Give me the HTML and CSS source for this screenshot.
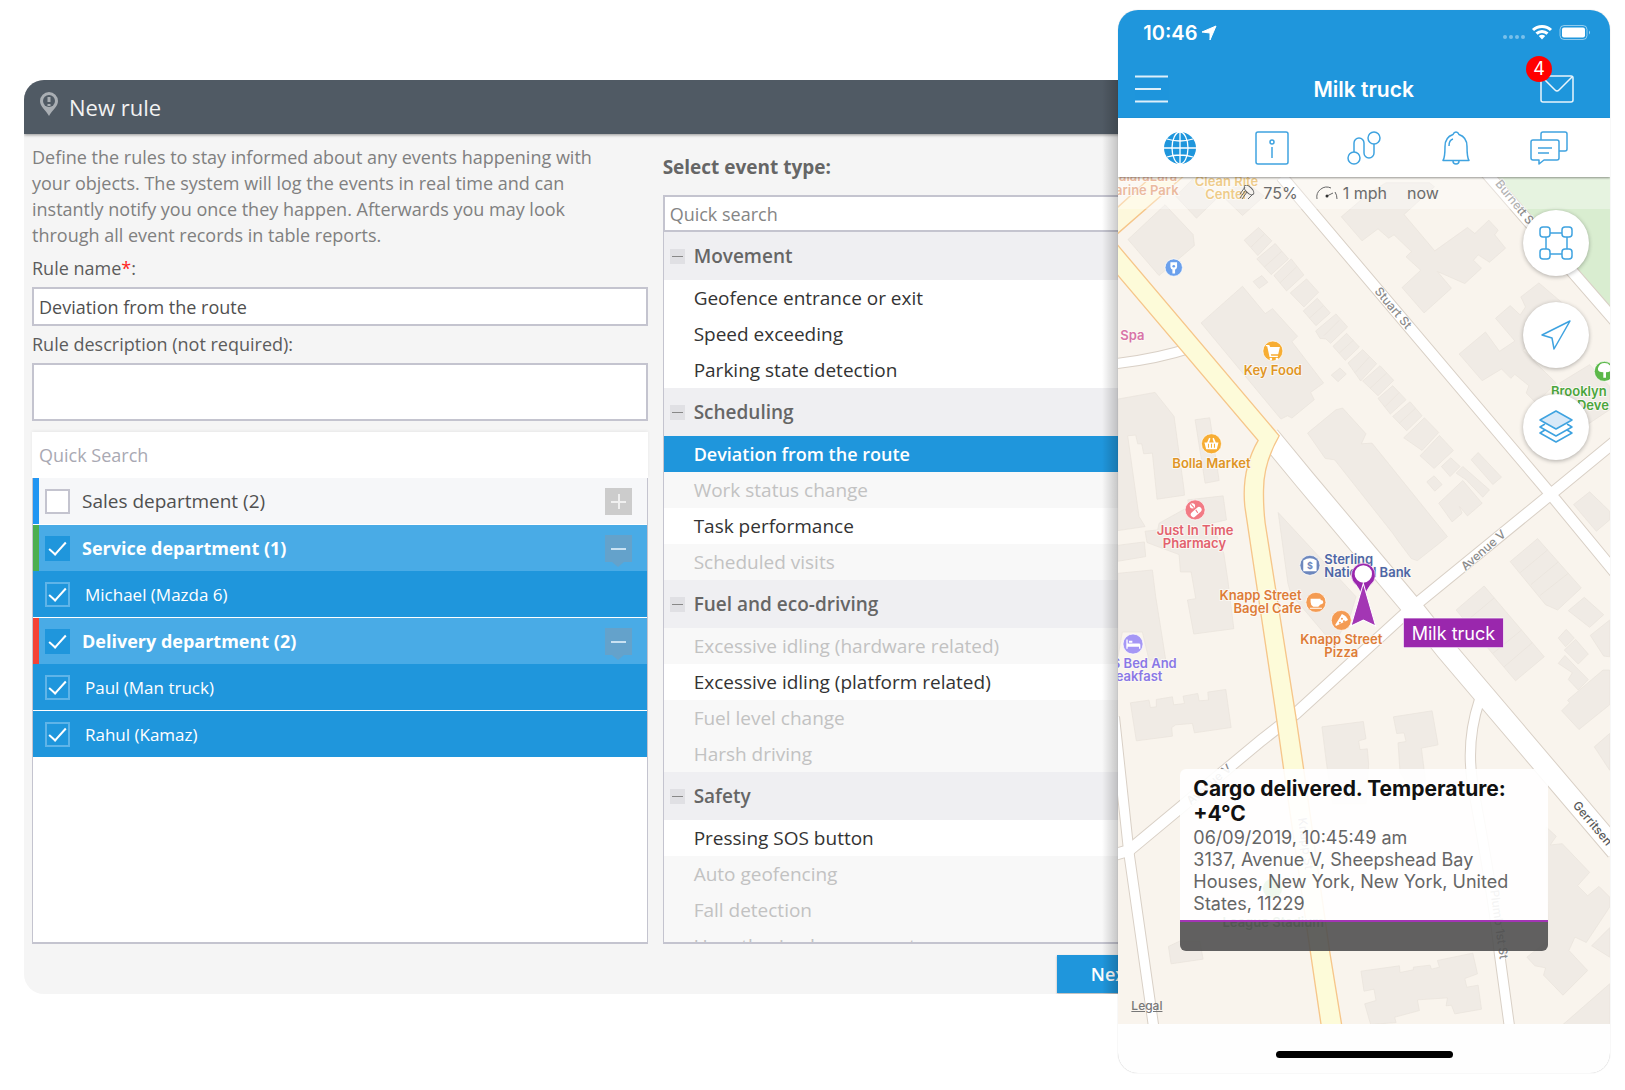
FILE: index.html
```html
<!DOCTYPE html>
<html lang="en">
<head>
<meta charset="utf-8">
<meta name="viewport" content="width=device-width, initial-scale=1">
<title>New rule</title>
<link rel="stylesheet" href="styles.css">
</head>
<body>
<main class="stage">
  <section class="panel">
    <header class="panel-head">
      <svg class="pin" viewBox="0 0 18 24" aria-hidden="true"><path d="M9 0a9 9 0 0 0-9 9c0 6 6 9 9 15 3-6 9-9 9-15a9 9 0 0 0-9-9z" fill="#a9aeb3"/><circle cx="9" cy="9" r="6" fill="#505a64"/><path d="M9 5v5M9 12v2" stroke="#a9aeb3" stroke-width="3"/></svg>
      <h1>New rule</h1>
    </header>
    <form class="panel-body">
      <div class="left">
        <p class="intro">Define the rules to stay informed about any events happening with your objects. The system will log the events in real time and can instantly notify you once they happen. Afterwards you may look through all event records in table reports.</p>
        <label class="field-label" for="rule-name">Rule name<span class="req">*</span>:</label>
        <input class="field" id="rule-name" type="text" value="Deviation from the route">
        <label class="field-label" for="rule-desc">Rule description (not required):</label>
        <textarea class="field area" id="rule-desc"></textarea>
        <input class="tree-search" type="search" placeholder="Quick Search" aria-label="Quick Search">
        <ul class="tree">
          <li class="row group blue"><label><input type="checkbox"><span>Sales department (2)</span></label><button type="button" class="toggle plus" aria-label="Expand"></button></li>
          <li class="row group on green"><label><input type="checkbox" checked><span>Service department (1)</span></label><button type="button" class="toggle" aria-label="Collapse"></button></li>
          <li class="row child"><label><input type="checkbox" checked><span>Michael (Mazda 6)</span></label></li>
          <li class="row group on red"><label><input type="checkbox" checked><span>Delivery department (2)</span></label><button type="button" class="toggle" aria-label="Collapse"></button></li>
          <li class="row child"><label><input type="checkbox" checked><span>Paul (Man truck)</span></label></li>
          <li class="row child"><label><input type="checkbox" checked><span>Rahul (Kamaz)</span></label></li>
        </ul>
      </div>
      <div class="right">
        <h2><label for="event-search">Select event type:</label></h2>
        <input class="event-search" id="event-search" type="search" placeholder="Quick search">
        <ul class="events">
          <li class="cat"><button type="button"><i></i>Movement</button></li>
          <li><button type="button">Geofence entrance or exit</button></li>
          <li><button type="button">Speed exceeding</button></li>
          <li><button type="button">Parking state detection</button></li>
          <li class="cat"><button type="button"><i></i>Scheduling</button></li>
          <li class="picked"><button type="button">Deviation from the route</button></li>
          <li><button type="button" disabled>Work status change</button></li>
          <li><button type="button">Task performance</button></li>
          <li><button type="button" disabled>Scheduled visits</button></li>
          <li class="cat"><button type="button"><i></i>Fuel and eco-driving</button></li>
          <li><button type="button" disabled>Excessive idling (hardware related)</button></li>
          <li><button type="button">Excessive idling (platform related)</button></li>
          <li><button type="button" disabled>Fuel level change</button></li>
          <li><button type="button" disabled>Harsh driving</button></li>
          <li class="cat"><button type="button"><i></i>Safety</button></li>
          <li><button type="button">Pressing SOS button</button></li>
          <li><button type="button" disabled>Auto geofencing</button></li>
          <li><button type="button" disabled>Fall detection</button></li>
          <li><button type="button" disabled>Unauthorized movement</button></li>
        </ul>
      </div>
      <footer class="panel-foot"><button type="submit" class="next">Next</button></footer>
    </form>
  </section>

  <section class="phone">
    <header class="app-head">
      <div class="status">
        <span class="clock">10:46</span>
        <svg class="loc" viewBox="0 0 14 14" aria-hidden="true"><path d="M14 0L8 14V7L0 6z" fill="#fff" stroke="#fff"/></svg>
        <svg class="signal" viewBox="0 0 88 18" aria-hidden="true">
          <g fill="#fff" opacity=".4"><circle cx="2" cy="13" r="2"/><circle cx="8" cy="13" r="2"/><circle cx="14" cy="13" r="2"/><circle cx="20" cy="13" r="2"/></g>
          <g fill="none" stroke="#fff" stroke-width="3"><path d="M30 6a13 13 0 0 1 18 0"/><path d="M33.500 9.700a8 8 0 0 1 11 0"/></g>
          <path d="M39 15.500l-3.200-3.500a5 5 0 0 1 6.400 0z" fill="#fff"/>
          <rect x="57" y="1.500" width="27" height="14" rx="4" fill="none" stroke="#fff" stroke-opacity=".5"/>
          <rect x="59" y="3.500" width="23" height="10" rx="2" fill="#fff"/>
          <path d="M86 6.500q2 2 0 4z" fill="#fff" opacity=".6"/>
        </svg>
      </div>
      <div class="title-bar">
        <button type="button" class="icon-btn menu" aria-label="Menu"><svg viewBox="0 0 34 28"><path d="M0 1.500h33M0 14h26M0 26.500h33" stroke="#fff" stroke-width="2" opacity=".85"/></svg></button>
        <h2>Milk truck</h2>
        <button type="button" class="icon-btn mail" aria-label="Messages"><svg viewBox="0 0 34 28"><g fill="none" stroke="#fff" stroke-width="1.500" opacity=".9"><rect x="1" y="1" width="32" height="26" rx="2"/><path d="M2 2l13 13q2 2 4 0L32 2"/></g></svg><span class="badge">4</span></button>
      </div>
    </header>
    <nav class="tabs">
      <button type="button" aria-label="Map"><svg viewBox="0 0 34 34"><circle cx="17" cy="17" r="16" fill="#1f96dc"/><g fill="none" stroke="#fff" stroke-width="1.300"><ellipse cx="17" cy="17" rx="8" ry="16"/><path d="M17 1v32M1 17h32M4 8q13 4 26 0M4 26q13-4 26 0"/></g></svg></button>
      <button type="button" aria-label="Info"><svg viewBox="0 0 34 34"><g class="ln"><rect x="1" y="1" width="32" height="32" rx="2"/><circle cx="17" cy="11" r="2"/><path d="M17 16v11"/></g></svg></button>
      <button type="button" aria-label="Tracks"><svg viewBox="0 0 34 34"><g class="ln"><circle cx="7" cy="27" r="6"/><circle cx="27" cy="7" r="6"/><path d="M7 21V12a5 5 0 0 1 10 0v10a5 5 0 0 0 10 0V13"/></g></svg></button>
      <button type="button" aria-label="Alerts"><svg viewBox="0 0 34 34"><g class="ln"><path d="M17 1q2 0 3 2.500c6 2 8 6 8 12 0 7 0 11 2 14H4c2-3 2-7 2-14 0-6 2-10 8-12Q15 1 17 1z"/><path d="M10 15q0-6 4-7M14 30q0 3 3 3t3-3"/></g></svg></button>
      <button type="button" aria-label="Chat"><svg viewBox="0 0 38 34"><g class="ln"><path d="M3 9h24q2 0 2 2v16q0 2-2 2H14l-5 4v-4H3q-2 0-2-2V11q0-2 2-2z"/><path d="M11 9V3q0-2 2-2h22q2 0 2 2v15q0 2-2 2h-6M8 17h14M8 22h11"/></g></svg></button>
    </nav>
    <div class="map">
      <svg class="map-art" viewBox="27 21 1473 2541" preserveAspectRatio="xMidYMid slice">
        <rect x="0" y="0" width="1600" height="2600" fill="#f9f4ed"/>
        <path d="M1165 21H1510V425z" fill="#d9edd0"/>
        <g class="bld">
          <path d="M57 210L168 106 252 195 256 228 150 318z"/>
          <path d="M200 80L250 30 320 90 262 146zM340 80L400 30 465 80 400 138z"/>
          <path d="M405 212L448 174 488 214 446 258zM443 268L498 222 538 268 486 315zM494 318L546 268 584 316 532 364zM543 370L592 328 628 368 584 412zM582 424L624 386 663 430 620 468zM619 484L680 433 715 472 664 521 650 508 632 506zM671 530L712 491 750 532 708 572zM716 580L760 540 802 582 754 634zM760 634L812 588 853 632 806 678zM806 686L850 648 890 690 843 733zM850 740L902 696 938 738 892 783zM883 804L945 744 988 788 938 842zM932 858L990 797 1032 842 974 896zM432 336L458 318 476 338 450 357zM666 616L692 595 711 613 686 636z"/>
          <path d="M426 232L465 194M466 292L518 245M512 340L562 292M600 446L642 408M644 498L690 452M690 550L732 512M738 608L780 562M782 656L832 610M828 710L870 668M870 760L918 716"/>
          <path d="M276 460L400 350 468 432 490 417 565 500 548 516 643 640 604 668 615 690 548 745 535 738 515 748z"/>
          <path d="M696 142L780 70 830 40 960 40 975 52 884 135 976 244 1074 174 1096 192 1138 152 1166 182 1156 196 1188 236 1140 278 1106 256 1092 272 1116 296 1066 342 984 306 1026 356 944 430 878 354 934 302 890 262 906 246 854 196 838 206 806 178 758 214z"/>
          <path d="M1049 553L1128 487 1170 545 1216 514 1158 446 1202 408 1232 436 1248 412 1234 382 1288 340 1370 410 1300 480 1240 542 1340 640 1280 700 1250 670 1258 648 1216 614 1204 626 1176 598 1118 633z"/>
          <path d="M1350 640L1440 585 1500 650V720L1410 780z"/>
          <path d="M595 790L680 720 700 715 770 792 756 822 788 820 1014 1100 990 1120 924 1172 906 1166 864 1110 850 1090 676 870 648 866z"/>
          <path d="M1085 870L1106 848 1176 922 1150 944zM996 890L1024 864 1052 890 1022 920zM952 936L974 918 998 944 976 964zM988 1000L1060 932 1118 1000 1074 1038 1050 1010 1058 1030 1028 1056zM1060 890L1140 960 1120 982 1070 930 1040 910z"/>
          <path d="M27 688L138 668 195 740 225 960 226 976 144 988 130 850 104 852 98 822 86 822 80 796 56 798 90 1040 106 1066 108 1070 27 1082zM258 750L302 744 330 932 288 940z"/>
          <path d="M108 1084L146 1080 150 1060 240 1010 236 990 342 978 352 1050 298 1062 320 1090 344 1150 356 1230 374 1376 254 1392 235 1290 260 1286 246 1206 214 1206 210 1154 114 1118zM27 1126L106 1116 110 1160 27 1174zM27 1210L130 1200 140 1280 156 1380 170 1470 120 1470 100 1386 40 1386 27 1460z"/>
          <path d="M64 1598L120 1590 124 1612 142 1610V1588L190 1580 194 1604 226 1600 222 1578 266 1570 270 1592 298 1590 296 1566 350 1558 366 1672 256 1688 250 1660 200 1664 188 1672 190 1698 82 1712z"/>
          <path d="M507 1028L740 1280 722 1340 690 1394 655 1402 545 1272 536 1240z"/>
          <path d="M638 1670L762 1654 770 1706 748 1712 752 1738 774 1736 778 1782 770 1900 670 1900 652 1782zM852 1640L968 1622 986 1724 936 1734 948 1830 900 1850 872 1806 866 1718 890 1714 884 1688 862 1690z"/>
          <path d="M1202 1175L1284 1106 1415 1254 1344 1320 1308 1304zM1040 1320L1124 1248 1304 1460 1218 1532 1140 1440z"/>
          <path d="M1232 1208L1314 1140M1264 1244L1346 1176M1292 1276L1376 1210M1070 1354L1154 1284M1150 1450L1236 1380M1184 1490L1268 1418"/>
          <path d="M1392 1004L1440 966 1500 1024V1050L1460 1084zM1346 1404L1370 1378 1394 1404 1368 1430zM1364 1440L1398 1408 1436 1452 1406 1482zM1376 1322L1424 1282 1482 1334 1440 1372zM1442 1396L1500 1350V1460L1482 1458zM1346 1480L1366 1456 1398 1490 1436 1528 1406 1560 1376 1528 1388 1508zM1356 1622L1380 1598 1374 1590 1480 1500H1500V1604L1408 1678zM1454 1730L1500 1690V1800z"/>
          <path d="M1310 1970L1340 1998 1322 2024 1358 2020 1440 2106 1404 2146 1434 2176 1468 2148 1500 2180V2210L1430 2316 1396 2300 1378 2340 1434 2400 1360 2474 1302 2414 1308 2392 1276 2386 1252 2360 1316 2310zM1446 2326L1500 2272V2360zM1360 2562L1500 2440V2562z"/>
          <path d="M178 2328L212 2312H272L282 2366 186 2380zM755 2402L870 2386 872 2406 912 2398V2390L962 2384 966 2396 990 2390 984 2370 1090 2348 1104 2410 1066 2424 1072 2450 1106 2444 1116 2516 1036 2530 1026 2504 1010 2506 1014 2482 924 2488 930 2520 856 2540 860 2556 784 2562 766 2500 800 2490 794 2456 764 2462z"/>
        </g>
        <g class="road-edge">
          <path stroke-width="38" d="M517 21L1325 975 1520 1212M1130 10L1520 458M1520 812L1325 972 905 1315 560 1630 457 1710 60 2040 20 2052"/>
          <path stroke-width="34" d="M16 1640L60 2050 134 2570M1110 1590C1080 1680 1078 1760 1088 1830S1150 2150 1170 2350L1200 2570M20 582Q150 566 240 536"/>
          <path stroke-width="66" d="M480 800L587 930 905 1308 1010 1440 1520 2040"/>
        </g>
        <g class="road-fill">
          <path stroke-width="32" d="M517 21L1325 975 1520 1212M1130 10L1520 458M1520 812L1325 972 905 1315 560 1630 457 1710 60 2040 20 2052"/>
          <path stroke-width="28" d="M16 1640L60 2050 134 2570M1110 1590C1080 1680 1078 1760 1088 1830S1150 2150 1170 2350L1200 2570M20 582Q150 566 240 536"/>
          <path stroke-width="60" d="M480 800L587 930 905 1308 1010 1440 1520 2040"/>
        </g>
        <path d="M10 208L510 798Q463 880 463 960 462 1010 468 1060L560 1640 583 1795 661 2342 700 2580H638L603 2342 523 1795 497 1610 407 1010Q396 900 447 812L10 298z" fill="#fdfbd9" stroke="#f6c68a" stroke-width="4"/>
        <path d="M10 128L140 10H235L10 206z" fill="#fdf8dc" stroke="#f6c68a" stroke-width="4"/>
        <g class="street">
          <text transform="translate(1156 44) rotate(51)">Burnett St</text>
          <text transform="translate(794 366) rotate(50)">Stuart St</text>
          <text transform="translate(1068 1204) rotate(-41)">Avenue V</text>
          <text transform="translate(246 1906) rotate(-41)">Avenue V</text>
          <text transform="translate(566 1944) rotate(82)">Knapp St</text>
          <text transform="translate(1142 2160) rotate(82)">Plumb 1st St</text>
          <text class="dark" transform="translate(1388 1906) rotate(50)">Gerritsen</text>
        </g>
        <g class="poi">
          <text x="30" y="36" fill="#e0956b">alaraLara</text>
          <text x="18" y="76" fill="#e0956b">arine Park</text>
          <text x="352" y="50" text-anchor="middle" fill="#e5b04a">Clean Rite</text>
          <text x="352" y="88" text-anchor="middle" fill="#e5b04a">Center</text>
          <text x="34" y="512" fill="#d874a8">Spa</text>
          <text x="491" y="616" text-anchor="middle" fill="#df9526">Key Food</text>
          <text x="307" y="894" text-anchor="middle" fill="#df9526">Bolla Market</text>
          <text x="1324" y="678" fill="#4ba53c">Brooklyn</text>
          <text x="1402" y="720" fill="#4ba53c">Deve</text>
          <text x="258" y="1095" text-anchor="middle" fill="#e2616d">Just In Time</text>
          <text x="256" y="1134" text-anchor="middle" fill="#e2616d">Pharmacy</text>
          <text x="645" y="1181" fill="#4d66a6">Sterling</text>
          <text x="645" y="1220" fill="#4d66a6">National Bank</text>
          <text x="577" y="1291" text-anchor="end" fill="#dd7c37">Knapp Street</text>
          <text x="577" y="1330" text-anchor="end" fill="#dd7c37">Bagel Cafe</text>
          <text x="696" y="1422" text-anchor="middle" fill="#dd7c37">Knapp Street</text>
          <text x="696" y="1461" text-anchor="middle" fill="#dd7c37">Pizza</text>
          <text x="203" y="1495" text-anchor="end" fill="#8a78e6">S Bed And</text>
          <text x="160" y="1534" text-anchor="end" fill="#8a78e6">eakfast</text>
          <text x="492" y="2270" text-anchor="middle" fill="#5f8f62">League Stadium</text>
        </g>
        <g stroke="#fff" stroke-width="2">
          <circle cx="194" cy="294" r="26" fill="#6ba0ec"/><circle cx="491" cy="544" r="30" fill="#f7ad33"/><circle cx="307" cy="822" r="30" fill="#f7ad33"/><circle cx="1484" cy="605" r="30" fill="#5cb84a"/><circle cx="258" cy="1020" r="30" fill="#f27a84"/><circle cx="602" cy="1186" r="30" fill="#6d87bd"/><circle cx="620" cy="1297" r="30" fill="#f49b53"/><circle cx="696" cy="1351" r="30" fill="#f49b53"/><circle cx="72" cy="1422" r="30" fill="#a597f5"/><circle cx="490" cy="2154" r="30" fill="#5cb84a"/>
        </g>
        <g fill="#fff">
          <path d="M184 278h20v14q-2 8-6 8v12h-8v-12q-4 0-6-8z"/><circle cx="194" cy="290" r="4" fill="#6ba0ec"/>
          <path d="M470 526h10l3 6h29l-5 22h-22l1 4h20v4h-25l-7-32h-4z"/><circle cx="485" cy="568" r="4"/><circle cx="503" cy="568" r="4"/>
          <path d="M286 818h8l6-14 4 2-4 12h14l-4-12 4-2 6 14h8l-5 20h-32z"/><path d="M298 822v12M307 822v12M316 822v12" stroke="#f7ad33" stroke-width="3"/>
          <path d="M1481 624v-16q-18 0-16-12 4-16 20-16t20 16q0 12-16 12v16z"/>
          <g transform="rotate(-42 262 1026)"><rect x="242" y="1018" width="38" height="16" rx="8"/></g><circle cx="250" cy="1008" r="8"/><path d="M245 1003l10 10M260 1020l6 9" stroke="#f27a84" stroke-width="3"/>
          <path d="M582 1172q20-14 40 0v32h-40z"/><text x="602" y="1196" text-anchor="middle" class="coin">$</text>
          <path d="M604 1286h30v4q8 0 8 6t-10 8q-3 6-6 6h-14q-8-4-8-14zM602 1313h36v3h-36z"/>
          <path d="M678 1364L698 1332q14 6 18 18L680 1368z"/><circle cx="698" cy="1346" r="3" fill="#f49b53"/><circle cx="704" cy="1354" r="3" fill="#f49b53"/><circle cx="692" cy="1358" r="3" fill="#f49b53"/>
          <path d="M52 1408h4v12h34q4 0 4 4v12h-4v-6H56v6h-4zM60 1412h10v6H60z"/>
        </g>
        <g>
          <path d="M762 1290q-6-26-22-46a36 36 0 1 1 44 0q-16 20-22 46z" fill="#9a27ad" stroke="#fff" stroke-width="2"/>
          <circle cx="762" cy="1212" r="26" fill="#fff"/>
          <path d="M762 1240L799 1368 762 1350 725 1368z" fill="#a336b4" stroke="#fff" stroke-width="3"/>
          <rect x="882" y="1344" width="300" height="89" fill="#9a27ad" stroke="#fff" stroke-width="2"/>
          <text class="tag" x="1032" y="1410" text-anchor="middle">Milk truck</text>
        </g>
      </svg>
      <div class="info">
        <svg class="sat" viewBox="0 0 16 16" aria-hidden="true"><g fill="none" stroke="#666"><ellipse cx="10" cy="5" rx="6" ry="3" transform="rotate(45 10 5)"/><path d="M6 2L1 9M14 9l-5 5M8 7l-5 7M6 6l-5 7"/></g></svg>
        <span class="pct">75%</span>
        <svg class="gauge" viewBox="0 0 22 14" aria-hidden="true"><path d="M1 13A10 10 0 0 1 15 2M19 6q2 3 2 7M11 10l6-3" fill="none" stroke="#666"/><circle cx="11" cy="10" r="1.500" fill="#333"/></svg>
        <span class="speed">1 mph</span>
        <span>now</span>
      </div>
      <div class="tools">
        <button type="button" aria-label="Geofences"><svg viewBox="0 0 34 34"><g class="ln"><rect x="1" y="1" width="10" height="10" rx="3"/><rect x="23" y="1" width="10" height="10" rx="3"/><rect x="1" y="23" width="10" height="10" rx="3"/><rect x="23" y="23" width="10" height="10" rx="3"/><path d="M11 7h12M11 28h12M7 11v12M28 11v12"/></g></svg></button>
        <button type="button" aria-label="My location"><svg viewBox="0 0 34 34"><path class="ln" d="M31 3L15 31 13 20 3 17z"/></svg></button>
        <button type="button" aria-label="Layers"><svg viewBox="0 0 34 34"><g class="ln"><path class="sheet" d="M17 1l16 9-16 9-16-9z"/><path d="M6 14l-5 3 16 9 16-9-5-3M6 20l-5 3 16 9 16-9-5-3"/></g></svg></button>
      </div>
      <article class="card">
        <div class="card-body">
          <h3>Cargo delivered. Temperature: +4°C</h3>
          <p class="when">06/09/2019, 10:45:49 am</p>
          <p>3137, Avenue V, Sheepshead Bay Houses, New York, New York, United States, 11229</p>
        </div>
        <div class="card-bar"></div>
      </article>
      <a class="legal" href="#legal">Legal</a>
    </div>
    <div class="home"><span></span></div>
  </section>
</main>
</body>
</html>
```
FILE: styles.css
```css
* { box-sizing: border-box; }
body { margin: 0; background: #fff; font-family: "Open Sans", "Noto Sans", sans-serif; font-size: 19px; color: #4d4d4d; }
h1, h2, h3, p, ul { margin: 0; padding: 0; }
ul { list-style: none; }
button, input, textarea { font: inherit; color: inherit; }
button { border: 0; padding: 0; background: none; }
svg { display: block; }

.stage { display: flex; align-items: flex-start; padding: 10px 15px 16px 24px; }

/* Rule editor */
.panel { position: relative; flex: 1; min-width: 0; margin: 70px -60px 0 0; background: #f5f5f5; border-radius: 20px; overflow: hidden; }
.panel::after { content: ""; position: absolute; top: 0; bottom: 0; right: 60px; width: 16px; background: linear-gradient(to right, rgba(0, 0, 0, 0), rgba(0, 0, 0, .2)); pointer-events: none; }
.panel-head { display: flex; align-items: center; gap: 11px; height: 54px; padding: 0 16px; background: #505a64; box-shadow: 0 1px 3px rgba(0, 0, 0, .4); }
.pin { width: 18px; height: 24px; margin-bottom: 6px; }
.panel-head h1 { font-size: 22px; font-weight: 400; line-height: 30px; color: #f2f2f2; }
.panel-body { display: grid; grid-template-columns: 616fr 508fr; column-gap: 15px; padding: 0 8px; }
.left, .right { display: flex; flex-direction: column; min-width: 0; }
.left { font-size: 18px; }
.intro { padding: 10px 24px 0 0; margin-bottom: 7px; line-height: 26px; color: #808080; }
.field-label { line-height: 26px; margin-bottom: 6px; color: #5c5c5c; }
.req { color: #f22; }
.field { width: 100%; height: 39px; padding: 0 5px; margin: 0 0 5px; border: 2px solid #c4c4cf; border-radius: 0; background: #fff; color: #505050; }
.area { height: 58px; margin-bottom: 11px; resize: none; }
.tree-search { height: 46px; padding: 0 7px; border: 0; background: #fff; font-size: 18px; box-shadow: 0 -1px 3px rgba(0, 0, 0, .06); }
.tree-search::placeholder { color: #a9a9b3; opacity: 1; }
.tree { flex: 1; border: 1px solid #c4c4cf; border-width: 0 1px 2px; background: #fff; }
.row { display: flex; align-items: center; justify-content: space-between; height: 46px; background: #1f96dc; color: #fff; }
.row label { display: flex; align-items: center; gap: 12px; }
.group { border-left: 6px solid; padding: 0 15px 0 6px; font-size: 18px; font-weight: 700; }
.blue { border-color: #2196f3; background: #f6f7f9; color: #505050; font-size: 19px; font-weight: 400; }
.on { background: #49abe6; }
.green { border-left-color: #4caf50; }
.red { border-left-color: #f44336; }
.child { padding-left: 12px; font-size: 17px; }
.child label { gap: 15px; }
.blue, .child { margin-bottom: 1px; }
.row input { appearance: none; display: grid; place-items: center; width: 25px; height: 25px; margin: 0; border: 2px solid #c4c4cf; background: #fff; }
.row input:checked { border-color: #1f96dc; background: #1f96dc; }
.child input:checked { border-color: #5fb4e8; }
.row input:checked::before { content: ""; width: 7px; height: 15px; margin-bottom: 5px; border: solid #fff; border-width: 0 2px 2px 0; transform: rotate(42deg); }
.toggle { position: relative; width: 27px; height: 27px; background: #64a2cb; }
.toggle::before { content: ""; position: absolute; left: 6px; right: 6px; top: 13px; height: 2px; background: #c9e2f3; }
.toggle::after { content: ""; position: absolute; left: 7px; top: 27px; border: 6px solid transparent; border-top: 5px solid #64a2cb; border-bottom: 0; }
.plus { background: #ccc; }
.plus::before { background: #f0f0f0; }
.plus::after { left: 13px; top: 6px; width: 2px; height: 15px; border: 0; background: #f0f0f0; }

.right h2 { padding: 20px 0 8px; margin-bottom: 7px; font-size: 19px; font-weight: 700; line-height: 26px; color: #666; }
.event-search { height: 37px; padding: 0 5px; border: 2px solid #c4c4cf; border-radius: 0; background: #fff; font-size: 18px; }
.event-search::placeholder { color: #858585; opacity: 1; }
.events { height: 712px; overflow: hidden; border: 1px solid #c4c4cf; border-width: 0 1px 2px; background: #fff; }
.events button { display: flex; align-items: center; width: 100%; height: 36px; padding-left: 30px; text-align: left; color: #333; }
.events button:disabled { background: #f8f8f8; color: #c2c2c2; }
.events .cat button { gap: 9px; height: 48px; padding-left: 6px; background: #efeff2; color: #666; font-weight: 600; }
.cat i { display: grid; place-items: center; width: 15px; height: 15px; background: #e0e0e4; }
.cat i::before { content: ""; width: 11px; height: 1px; background: #888; }
.events .picked button { background: #1f96dc; color: #fff; font-size: 18px; font-weight: 600; }
.panel-foot { grid-column: 1 / -1; display: flex; justify-content: flex-end; padding: 11px 4px 1px 0; }
.next { height: 38px; padding: 0 34px; background: #1f96dc; color: #fff; font-size: 18px; font-weight: 600; box-shadow: 0 1px 2px rgba(0, 0, 0, .3); }

/* Phone */
.phone { position: relative; flex: 0 0 31%; min-width: 0; border-radius: 20px; overflow: hidden; background: #fefefe; box-shadow: 0 0 1px rgba(0, 0, 0, .3); font-family: Inter, "Liberation Sans", sans-serif; }
.app-head { height: 108px; background: #1f96dc; color: #fff; }
.status { display: flex; align-items: center; height: 46px; padding: 0 19px 0 25px; }
.clock { font-size: 20px; font-weight: 600; }
.loc { width: 14px; height: 14px; margin-left: 5px; overflow: visible; }
.signal { width: 88px; height: 18px; margin-left: auto; }
.title-bar { display: grid; grid-template-columns: 34px 1fr 34px; align-items: center; height: 66px; padding: 0 36px 0 17px; }
.title-bar h2 { padding-left: 18px; font-size: 21px; font-weight: 600; text-align: center; }
.icon-btn { position: relative; width: 34px; height: 28px; }
.badge { position: absolute; left: -14px; top: -19px; width: 26px; height: 26px; border-radius: 50%; background: #f00; color: #fff; font-size: 18px; line-height: 26px; text-align: center; }
.tabs { position: relative; z-index: 1; display: grid; grid-template-columns: repeat(5, 1fr); height: 59px; padding: 0 15px; background: #fff; box-shadow: 0 1px 2px rgba(0, 0, 0, .4); }
.tabs button { display: grid; place-items: center; }
.tabs svg { height: 34px; }
.ln { fill: none; stroke: #3fa3e0; stroke-width: 1.5px; stroke-linejoin: round; }
.sheet { fill: #d8e9f8; }
.map { position: relative; height: 847px; overflow: hidden; }
.map-art { width: 100%; height: 100%; }
.bld { fill: #f0ebe5; stroke: #e8e2db; stroke-width: 2px; }
.road-edge { fill: none; stroke: #d9d0c6; }
.road-fill { fill: none; stroke: #fff; }
.street text { font-size: 36px; font-weight: 500; fill: #8b8b8b; stroke: #fff; stroke-width: 4px; paint-order: stroke; }
.street .dark { fill: #5a5a5a; }
.poi text { font-size: 39px; font-weight: 600; stroke: #fdfaf5; stroke-width: 5px; paint-order: stroke; }
.coin { font-size: 27px; font-weight: 700; fill: #6d87bd; }
.tag { font-size: 54px; fill: #fff; }
.info { position: absolute; inset: 0 0 auto; display: flex; align-items: center; height: 32px; padding-left: 121px; background: rgba(255, 255, 255, .35); font-size: 16px; color: #6b6b6b; }
.sat { width: 16px; height: 16px; margin-right: 8px; }
.gauge { width: 22px; height: 14px; margin: 0 5px 0 18px; }
.speed { margin-right: 20px; }
.tools { position: absolute; top: 33px; right: 21px; display: grid; gap: 26px; }
.tools button { display: grid; place-items: center; width: 66px; height: 66px; border-radius: 50%; background: #fff; box-shadow: 0 1px 4px rgba(0, 0, 0, .3); }
.tools svg { width: 34px; height: 34px; }
.card { position: absolute; left: 62px; right: 62px; bottom: 73px; border-radius: 6px; overflow: hidden; color: #666; }
.card-body { padding: 7px 13px 5px; border-bottom: 2px solid #a335b5; background: rgba(255, 255, 255, .9); font-size: 18px; line-height: 22px; }
.card h3 { font-size: 21px; font-weight: 700; line-height: 25px; color: #111; }
.when { line-height: 23px; }
.card-bar { height: 29px; background: rgba(80, 80, 80, .9); }
.legal { position: absolute; left: 13px; bottom: 10px; font-size: 12px; font-weight: 500; line-height: 16px; color: #777; }
.home { display: grid; justify-items: center; align-items: end; height: 49px; padding-bottom: 15px; }
.home span { width: 36%; height: 7px; border-radius: 4px; background: #000; }
```
